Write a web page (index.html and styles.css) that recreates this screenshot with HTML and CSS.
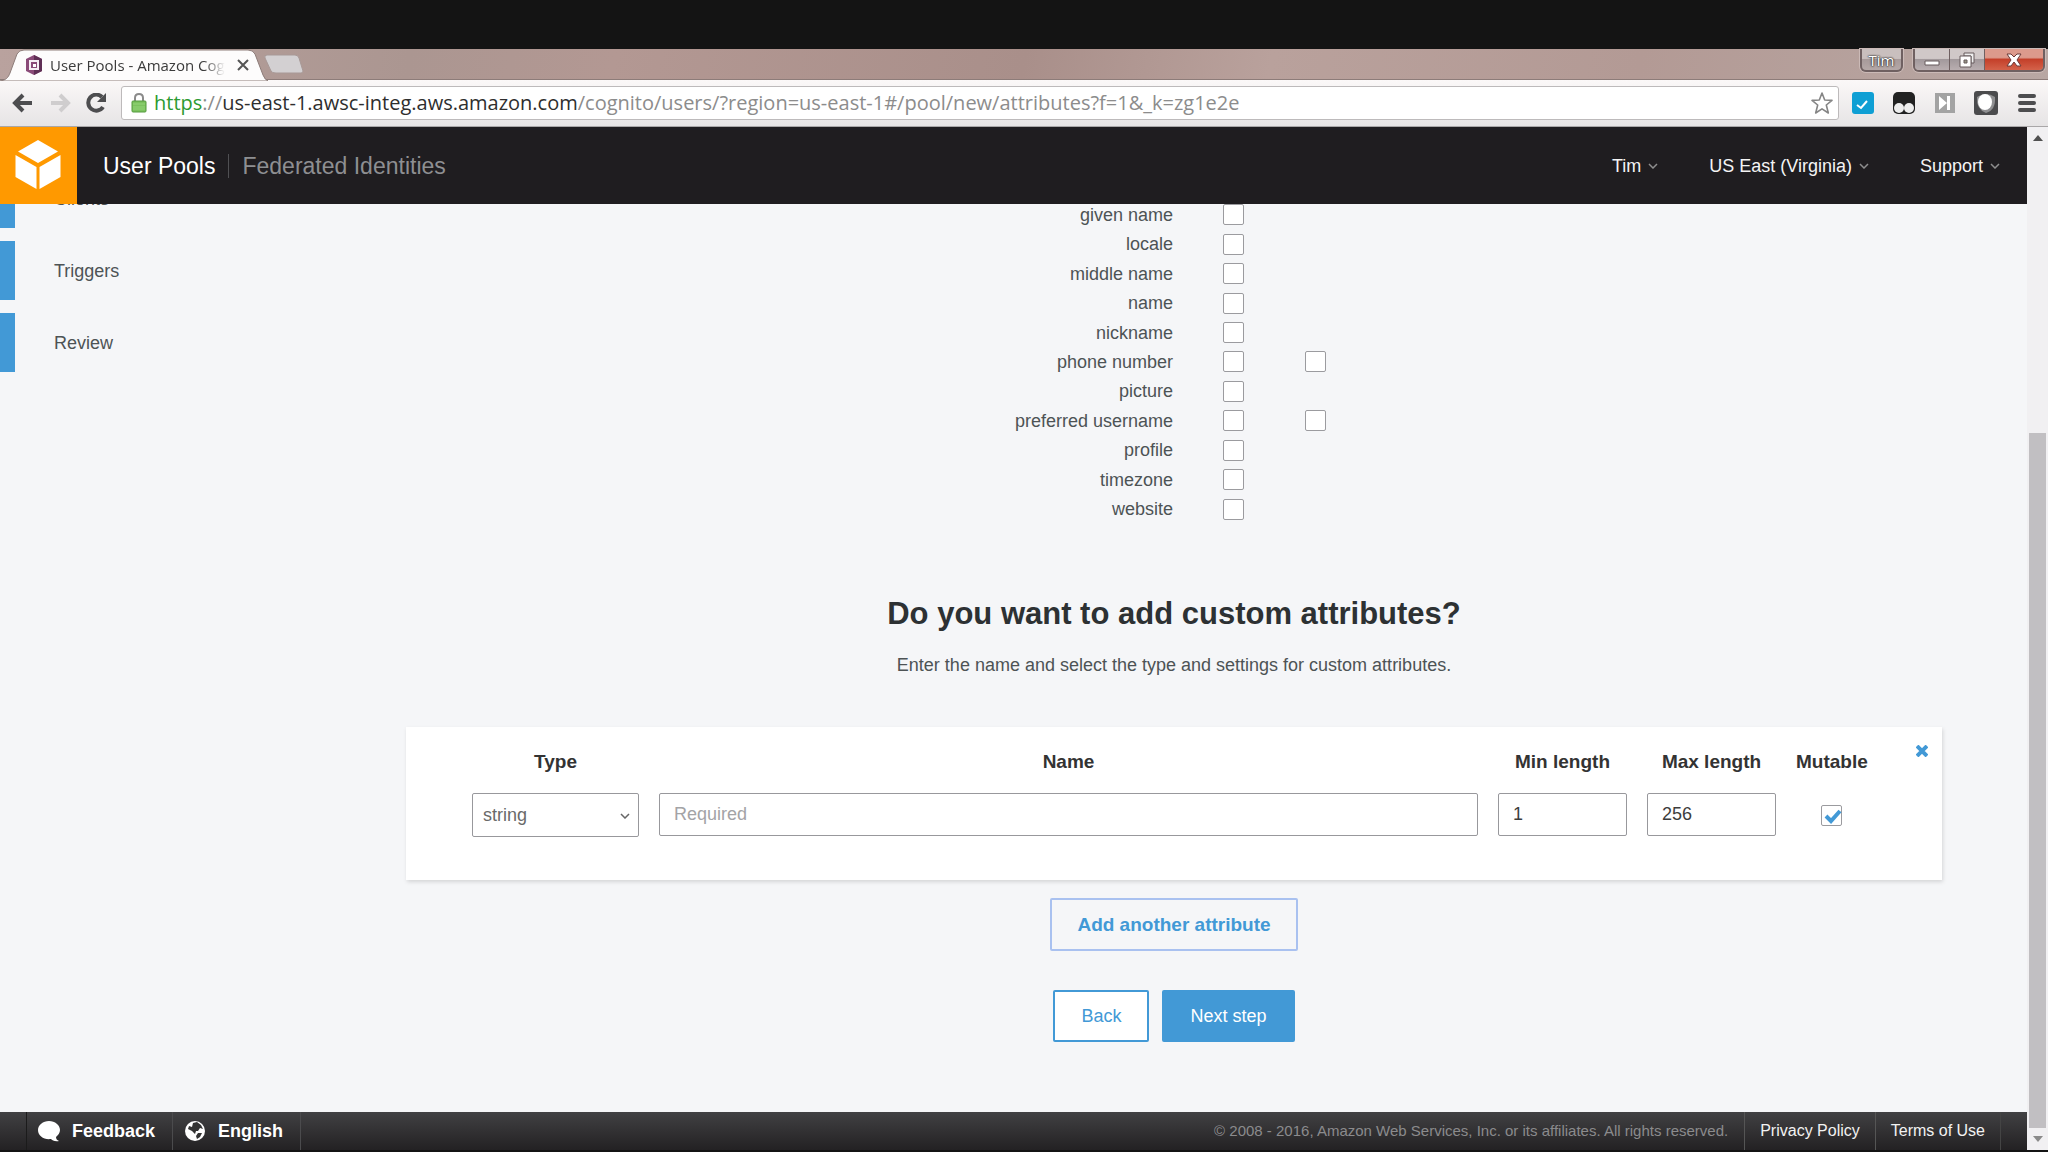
FILE: index.html
```html
<!DOCTYPE html>
<html lang="en">
<head>
<meta charset="utf-8">
<title>User Pools - Amazon Cognito</title>
<link rel="stylesheet" href="styles.css">
</head>
<body>
<div class="window">
  <div class="titlebar">
    <div class="tab">
      <svg class="tab-shape" viewBox="0 0 268 32" preserveAspectRatio="none"><path d="M0 32C6 31 8 29 10 24L17 5Q19 1 24 1H248Q253 1 255 5L263 26Q265 31 268 32Z" fill="#fdfcfc" stroke="#8d7c79"/></svg>
      <svg class="favicon" viewBox="0 0 20 20"><path d="M10 0L18 4V16L10 20L2 16V4Z" fill="#8a4a78"/><path d="M10 0L18 4V16L10 20Z" fill="#5f2f55"/><path d="M5 5H15V15H5Z" fill="#f6eef4"/><path d="M7 7H13V13H7Z" fill="#8a4a78"/><path d="M9 9H12V12H9Z" fill="#fff"/></svg>
      <span class="tab-title">User Pools - Amazon Cognito</span>
      <button class="tab-close" aria-label="Close tab"><svg viewBox="0 0 12 12"><path d="M1 1L11 11M11 1L1 11" stroke="#555" stroke-width="2"/></svg></button>
    </div>
    <button class="new-tab" aria-label="New tab"><svg viewBox="0 0 40 20"><path d="M1 4Q0 1 3 1H31Q34 1 35 4L39 17Q39 19 37 19H12Q8 19 7 17Z" fill="#d3d0d2" stroke="#a89997"/></svg></button>
    <div class="caption">
      <button class="profile">Tim</button>
      <div class="controls">
        <button class="ctl" aria-label="Minimize"><svg viewBox="0 0 18 16"><path d="M2 9H16V13H2Z" fill="#fff" stroke="#665a5c"/></svg></button>
        <button class="ctl" aria-label="Restore"><svg viewBox="0 0 18 16"><path d="M6 1H16V11H13V4H6Z" fill="#eee" stroke="#665a5c"/><path d="M2 4H13V15H2Z" fill="#fff" stroke="#665a5c"/><path d="M6 8H9V11H6Z" fill="#998" stroke="#665a5c"/></svg></button>
        <button class="ctl close" aria-label="Close"><svg viewBox="0 0 18 16"><path d="M2 2H6L9 5L12 2H16L12 8L16 14H12L9 10L6 14H2L6 8Z" fill="#fff" stroke="#6b3a38"/></svg></button>
      </div>
    </div>
  </div>

  <div class="toolbar">
    <button class="nav" aria-label="Back"><svg viewBox="0 0 22 20"><path d="M20 10H4M11 2L3 10L11 18" fill="none" stroke="#4d4d4f" stroke-width="4"/></svg></button>
    <button class="nav" aria-label="Forward"><svg viewBox="0 0 22 20"><path d="M2 10H18M11 2L19 10L11 18" fill="none" stroke="#cfcdce" stroke-width="4"/></svg></button>
    <button class="nav" aria-label="Reload"><svg viewBox="0 0 22 20"><path d="M17 14A8 8 0 1 1 16 4" fill="none" stroke="#4d4d4f" stroke-width="4"/><path d="M20 0V9H11Z" fill="#4d4d4f"/></svg></button>
    <div class="address">
      <svg class="lock" viewBox="0 0 16 20"><path d="M4 10V5Q4 1 8 1T12 5V10" fill="none" stroke="#8b8b8b" stroke-width="2"/><rect x="1" y="8" width="14" height="11" rx="1" fill="#7cc35f" stroke="#559a3e"/><path d="M2 11H14M2 14H14M2 16H14" stroke="#94d47b"/></svg>
      <div class="url" role="textbox" aria-label="Address" contenteditable="true" spellcheck="false"><span class="scheme">https</span>://<span class="host">us-east-1.awsc-integ.aws.amazon.com</span>/cognito/users/?region=us-east-1#/pool/new/attributes?f=1&amp;_k=zg1e2e</div>
      <svg class="star" viewBox="0 0 24 24"><path d="M12 2L14.700 9L22 9.400L16.300 14L18.300 22L12 17.800L5.700 22L7.700 14L2 9.400L9.300 9Z" fill="#fff" stroke="#858585" stroke-width="1.600" stroke-linejoin="round"/></svg>
    </div>
    <div class="extensions">
      <button class="ext" aria-label="Tasks"><svg viewBox="0 0 24 24"><rect x="1" y="1" width="22" height="22" rx="3" fill="#0f9fd4"/><path d="M6 14L10 17L16 10" fill="none" stroke="#fff" stroke-width="2"/></svg></button>
      <button class="ext" aria-label="Scripts"><svg viewBox="0 0 24 24"><rect x="1" y="1" width="22" height="22" rx="5" fill="#222"/><circle cx="7" cy="17" r="5" fill="#eee"/><circle cx="17" cy="17" r="5" fill="#eee"/></svg></button>
      <button class="ext" aria-label="Skip"><svg viewBox="0 0 24 24"><rect x="2" y="2" width="20" height="20" fill="#a3a3a3"/><path d="M6 5L14 12L6 19ZM14 5H17V19H14Z" fill="#fff"/></svg></button>
      <button class="ext" aria-label="Shield"><svg viewBox="0 0 24 24"><rect width="24" height="24" rx="3" fill="#4b4b4d"/><path d="M3 6Q12 0 21 6Q22 19 12 22Q2 18 3 6Z" fill="#8f8f91"/><ellipse cx="11" cy="11" rx="7" ry="8" fill="#fff"/></svg></button>
      <button class="ext" aria-label="Menu"><svg viewBox="0 0 24 24"><path d="M5 5H19M5 12H19M5 19H19" stroke="#4d4d4f" stroke-width="4" stroke-linecap="round"/></svg></button>
    </div>
  </div>

  <div class="viewport">
    <div class="page">
      <header class="app-header">
        <a class="logo" href="#" aria-label="Services"><svg viewBox="0 0 77 77"><path d="M38 13L58 24.500L38 36L18 24.500ZM15.500 28L36.500 40V62L15.500 50ZM39.500 40L60.500 28V50L39.500 62Z" fill="#fff"/></svg></a>
        <nav class="sections">
          <a class="current" href="#">User Pools</a>
          <a href="#">Federated Identities</a>
        </nav>
        <div class="menus">
          <button>Tim <svg viewBox="0 0 10 6"><path d="M1 1L5 5L9 1"/></svg></button>
          <button>US East (Virginia) <svg viewBox="0 0 10 6"><path d="M1 1L5 5L9 1"/></svg></button>
          <button>Support <svg viewBox="0 0 10 6"><path d="M1 1L5 5L9 1"/></svg></button>
        </div>
      </header>

      <div class="content">
        <nav class="steps">
          <a href="#">Clients</a>
          <a href="#">Triggers</a>
          <a href="#">Review</a>
        </nav>
        <main class="main">
          <table class="attributes">
            <colgroup><col class="c-name"><col class="c-required"><col class="c-alias"><col></colgroup>
            <tr><th scope="row"><label for="a1">given name</label></th><td><input type="checkbox" id="a1"></td><td></td><td></td></tr>
            <tr><th scope="row"><label for="a2">locale</label></th><td><input type="checkbox" id="a2"></td><td></td><td></td></tr>
            <tr><th scope="row"><label for="a3">middle name</label></th><td><input type="checkbox" id="a3"></td><td></td><td></td></tr>
            <tr><th scope="row"><label for="a4">name</label></th><td><input type="checkbox" id="a4"></td><td></td><td></td></tr>
            <tr><th scope="row"><label for="a5">nickname</label></th><td><input type="checkbox" id="a5"></td><td></td><td></td></tr>
            <tr><th scope="row"><label for="a6">phone number</label></th><td><input type="checkbox" id="a6"></td><td><input type="checkbox" aria-label="phone number alias"></td><td></td></tr>
            <tr><th scope="row"><label for="a7">picture</label></th><td><input type="checkbox" id="a7"></td><td></td><td></td></tr>
            <tr><th scope="row"><label for="a8">preferred username</label></th><td><input type="checkbox" id="a8"></td><td><input type="checkbox" aria-label="preferred username alias"></td><td></td></tr>
            <tr><th scope="row"><label for="a9">profile</label></th><td><input type="checkbox" id="a9"></td><td></td><td></td></tr>
            <tr><th scope="row"><label for="a10">timezone</label></th><td><input type="checkbox" id="a10"></td><td></td><td></td></tr>
            <tr><th scope="row"><label for="a11">website</label></th><td><input type="checkbox" id="a11"></td><td></td><td></td></tr>
          </table>

          <h1>Do you want to add custom attributes?</h1>
          <p class="lead">Enter the name and select the type and settings for custom attributes.</p>

          <form class="card">
            <div class="field type">
              <label for="type">Type</label>
              <div class="select">
                <select id="type"><option>string</option><option>number</option></select>
                <svg viewBox="0 0 10 6"><path d="M1 1L5 5L9 1"/></svg>
              </div>
            </div>
            <div class="field name">
              <label for="name">Name</label>
              <input type="text" id="name" placeholder="Required">
            </div>
            <div class="field length">
              <label for="min">Min length</label>
              <input type="text" id="min" value="1">
            </div>
            <div class="field length">
              <label for="max">Max length</label>
              <input type="text" id="max" value="256">
            </div>
            <div class="field mutable">
              <label for="mutable">Mutable</label>
              <div class="check">
                <input type="checkbox" id="mutable" checked>
                <svg viewBox="0 0 20 20"><path d="M4 10L9 15L18 5" fill="none" stroke="#4299d6" stroke-width="4"/></svg>
              </div>
            </div>
            <button type="button" class="remove" aria-label="Remove attribute"><svg viewBox="0 0 12 12"><path d="M1 1L11 11M11 1L1 11" stroke="#4299d6" stroke-width="4"/></svg></button>
          </form>

          <button class="btn add">Add another attribute</button>
          <div class="actions">
            <button class="btn back">Back</button>
            <button class="btn next">Next step</button>
          </div>
        </main>
      </div>

      <footer class="footer">
        <a class="tool" href="#"><svg viewBox="0 0 22 22"><path d="M11 1C17 1 22 5 22 10C22 13 20 15 18 17C18 19 19 20 21 21C17 22 14 20 13 19C6 20 0 16 0 10C0 5 5 1 11 1Z" fill="#fff"/></svg>Feedback</a>
        <a class="tool" href="#"><svg viewBox="0 0 22 22"><circle cx="11" cy="11" r="10" fill="#fff"/><path d="M9 3L13 2L17 5L19 9L16 8L14 11L12 11L11 14L8 11L4 9L5 6L8 7ZM14 13L18 13L16 17L13 19L12 16Z" fill="#333"/></svg>English</a>
        <span class="copyright">© 2008 - 2016, Amazon Web Services, Inc. or its affiliates. All rights reserved.</span>
        <a class="legal" href="#">Privacy Policy</a>
        <a class="legal last" href="#">Terms of Use</a>
      </footer>
    </div>
    <div class="scrollbar">
      <svg viewBox="0 0 10 6"><path d="M0 6L5 0L10 6Z" fill="#505050"/></svg>
      <div class="track"><div class="thumb"></div></div>
      <svg viewBox="0 0 10 6"><path d="M0 0L5 6L10 0Z" fill="#8a8a8a"/></svg>
    </div>
  </div>
</div>
</body>
</html>
```
FILE: styles.css
```css
* { box-sizing: border-box; }

body {
  margin: 0;
  background: #141414;
  color: #4d5355;
  font: 18px/24px "Liberation Sans", Arial, sans-serif;
}

button {
  margin: 0;
  padding: 0;
  border: 0;
  background: none;
  color: inherit;
  font: inherit;
}

a { color: inherit; text-decoration: none; }
svg { display: block; flex: none; }

.window {
  display: flex;
  flex-direction: column;
  height: 100vh;
  padding: 49px 0 2px;
}

/* Browser frame */
.titlebar {
  display: flex;
  flex: none;
  height: 31px;
  background: linear-gradient(100deg, #b9a29e 0, #ab9691 20%, #b39893 30%, #a98f8a 50%, #b9a19c 62%, #b39a95 80%, #b8a7a3 100%);
  border-bottom: 1px solid #8d7c79;
}

.tab {
  position: relative;
  display: flex;
  align-items: center;
  width: 268px;
  height: 32px;
  padding: 0 18px 0 24px;
}

.tab-shape { position: absolute; inset: 0; width: 100%; height: 100%; }
.favicon { position: relative; width: 20px; height: 20px; }

.tab-title {
  position: relative;
  width: 175px;
  margin-left: 6px;
  overflow: hidden;
  white-space: nowrap;
  color: #3b3b3b;
  font: 15px/24px "Open Sans", "Noto Sans", sans-serif;
  -webkit-mask-image: linear-gradient(90deg, #000 88%, transparent);
  mask-image: linear-gradient(90deg, #000 88%, transparent);
}

.tab-close { position: relative; margin-left: 12px; }
.tab-close svg { width: 12px; height: 12px; }
.new-tab { align-self: center; margin-left: -4px; }
.new-tab svg { width: 40px; height: 20px; }

.caption { display: flex; gap: 10px; margin-left: auto; padding-right: 3px; }

.profile,
.controls {
  height: 23px;
  border: 2px solid #6f6061;
  border-top: 0;
  border-radius: 0 0 6px 6px;
  box-shadow: 0 0 0 1px #cbbab7;
}

.profile {
  width: 43px;
  background: linear-gradient(#c9bfbe 45%, #a79a9a 50%, #b5a8a7);
  color: #fff;
  font: 15px/20px "Open Sans", "Noto Sans", sans-serif;
  text-shadow: 0 0 1px #333, 0 0 2px #333, 0 0 2px #333;
}

.controls { display: flex; overflow: hidden; }

.ctl {
  display: grid;
  place-items: center;
  width: 35px;
  background: linear-gradient(#d0c8c8 45%, #a2999c 50%, #b9aeb0);
  border-right: 1px solid #6f6061;
}

.ctl svg { width: 18px; height: 16px; }
.ctl.close { width: 58px; border: 0; background: linear-gradient(#dc9a8c 40%, #c4402a 50%, #d4624a); }

.toolbar {
  display: flex;
  flex: none;
  align-items: center;
  height: 47px;
  padding: 0 9px 0 12px;
  background: linear-gradient(#fbf8f8, #e6e4e5);
  border-bottom: 1px solid #a9a7a8;
}

.nav { margin-right: 15px; }
.nav svg { width: 22px; height: 20px; }

.address {
  display: flex;
  flex: 1;
  align-items: center;
  height: 34px;
  margin-left: -2px;
  padding: 0 4px 0 9px;
  background: #fff;
  border: 1px solid #bdbabb;
  border-radius: 3px;
}

.lock { width: 16px; height: 20px; }

.url {
  flex: 1;
  margin-left: 7px;
  overflow: hidden;
  white-space: nowrap;
  color: #8c8c8c;
  font: 20px/30px "Open Sans", "Noto Sans", sans-serif;
}

.scheme { color: #2c9a31; }
.host { color: #2e2e2e; }
.star { width: 24px; height: 24px; }
.extensions { display: flex; gap: 17px; margin-left: 12px; }
.ext svg { width: 24px; height: 24px; }

.viewport { display: flex; flex: 1; min-height: 0; }

.page {
  display: flex;
  flex: 1;
  flex-direction: column;
  min-width: 0;
  background: #f5f6f8;
}

/* Console header */
.app-header {
  display: flex;
  flex: none;
  align-items: center;
  height: 77px;
  padding-right: 27px;
  background: #1f1d20;
}

.logo { background: #ff9900; }
.logo svg { width: 77px; height: 77px; }

.sections { display: flex; margin-left: 13px; font-size: 23px; }
.sections a { padding: 0 13px; color: #8e8f92; }
.sections .current { border-right: 1px solid #505053; color: #fff; }

.menus { display: flex; gap: 51px; margin-left: auto; color: #f4f4f4; }
.menus button { display: flex; align-items: center; gap: 7px; }

.menus svg,
.select svg {
  width: 10px;
  height: 6px;
  fill: none;
  stroke: #8e8e8e;
  stroke-width: 1.5;
}

/* Wizard */
.content { display: flex; flex: 1; min-height: 0; overflow: hidden; }

.steps {
  display: flex;
  flex: none;
  flex-direction: column;
  gap: 13px;
  width: 320px;
  margin-top: -35px;
}

.steps a {
  flex: none;
  height: 59px;
  padding-left: 39px;
  border-left: 15px solid #4299d6;
  line-height: 61px;
}

.main {
  display: flex;
  flex: 1;
  flex-direction: column;
  align-items: center;
  min-width: 0;
  margin-top: -4px;
  padding: 0 85px 0 86px;
}

.attributes {
  flex: none;
  width: 100%;
  height: 324px;
  table-layout: fixed;
  border-collapse: collapse;
}

.c-name { width: 50%; }
.c-required { width: 118px; }
.c-alias { width: 46px; }
.attributes th { padding: 0 1px 0 0; font-weight: normal; text-align: right; line-height: 20px; }
.attributes td { padding: 0; }

input[type="checkbox"] {
  display: block;
  appearance: none;
  width: 21px;
  height: 21px;
  margin: 0 auto;
  background: #fff;
  border: 1px solid #9b9b9f;
  border-radius: 2px;
}

h1 {
  margin: 72px 0 0;
  color: #2d3133;
  font-size: 31px;
  line-height: 36px;
}

.lead { margin: 21px 0 50px; }

.card {
  position: relative;
  display: flex;
  flex: none;
  gap: 20px;
  width: 100%;
  height: 153px;
  padding: 23px 76px 0 66px;
  background: #fff;
  box-shadow: 1px 2px 4px #0002;
}

.field { text-align: center; }
.field label { display: block; margin-bottom: 19px; color: #333; font-size: 19px; font-weight: bold; }
.type { width: 167px; }
.name { flex: 1; }
.length { width: 129px; }
.mutable { width: 70px; }

.field input[type="text"],
.select select {
  display: block;
  width: 100%;
  height: 43px;
  padding: 0 14px;
  background: #fff;
  border: 1px solid #98989c;
  border-radius: 2px;
  color: #3d3d3d;
  font: inherit;
}

.field input::placeholder { color: #a3a3a6; }
.select { position: relative; }
.select select { appearance: none; height: 44px; padding: 0 10px; color: #6a6a6a; }
.select svg { position: absolute; right: 9px; top: 20px; stroke: #666; }
.check { position: relative; width: 21px; margin: 31px auto 0; }
.check svg { position: absolute; left: 1px; top: 1px; width: 20px; height: 20px; }
.remove { position: absolute; top: 18px; right: 14px; }
.remove svg { width: 12px; height: 12px; }

.btn {
  padding: 0 26px;
  border: 2px solid #4299d6;
  border-radius: 2px;
  color: #4299d6;
}

.add { height: 53px; margin-top: 18px; padding: 0 25px; border-color: #a9c1f0; font-size: 19px; font-weight: bold; }
.actions { display: flex; gap: 13px; margin-top: 39px; }
.actions .btn { height: 52px; }
.back { background: #fff; }
.next { background: #4299d6; color: #fff; }

.footer {
  display: flex;
  flex: none;
  align-items: center;
  height: 38px;
  padding: 0 26px;
  background: linear-gradient(#414143, #232123);
  line-height: 38px;
}

.tool {
  display: flex;
  align-items: center;
  gap: 12px;
  padding: 0 17px 0 11px;
  border-left: 1px solid #1b1b1b;
  color: #fff;
  font-weight: bold;
}

.tool svg { width: 22px; height: 22px; }
.tool + .tool { border-right: 1px solid #4b4b4d; border-left-color: #4b4b4d; }
.copyright { margin-left: auto; padding-right: 16px; color: #8b8b8d; font-size: 15px; }
.legal { padding: 0 15px; border-left: 1px solid #555; color: #f2f2f2; font-size: 16px; }
.legal.last { border-right: 1px solid #444; }

.scrollbar {
  display: flex;
  flex: none;
  flex-direction: column;
  align-items: center;
  width: 21px;
  padding: 8px 0;
  background: #f1f0f2;
}

.scrollbar svg { width: 10px; height: 6px; }
.track { display: flex; flex: 1; align-items: flex-end; padding: 8px 0; }
.thumb { width: 17px; height: 71%; background: #c1bfc2; }
```
